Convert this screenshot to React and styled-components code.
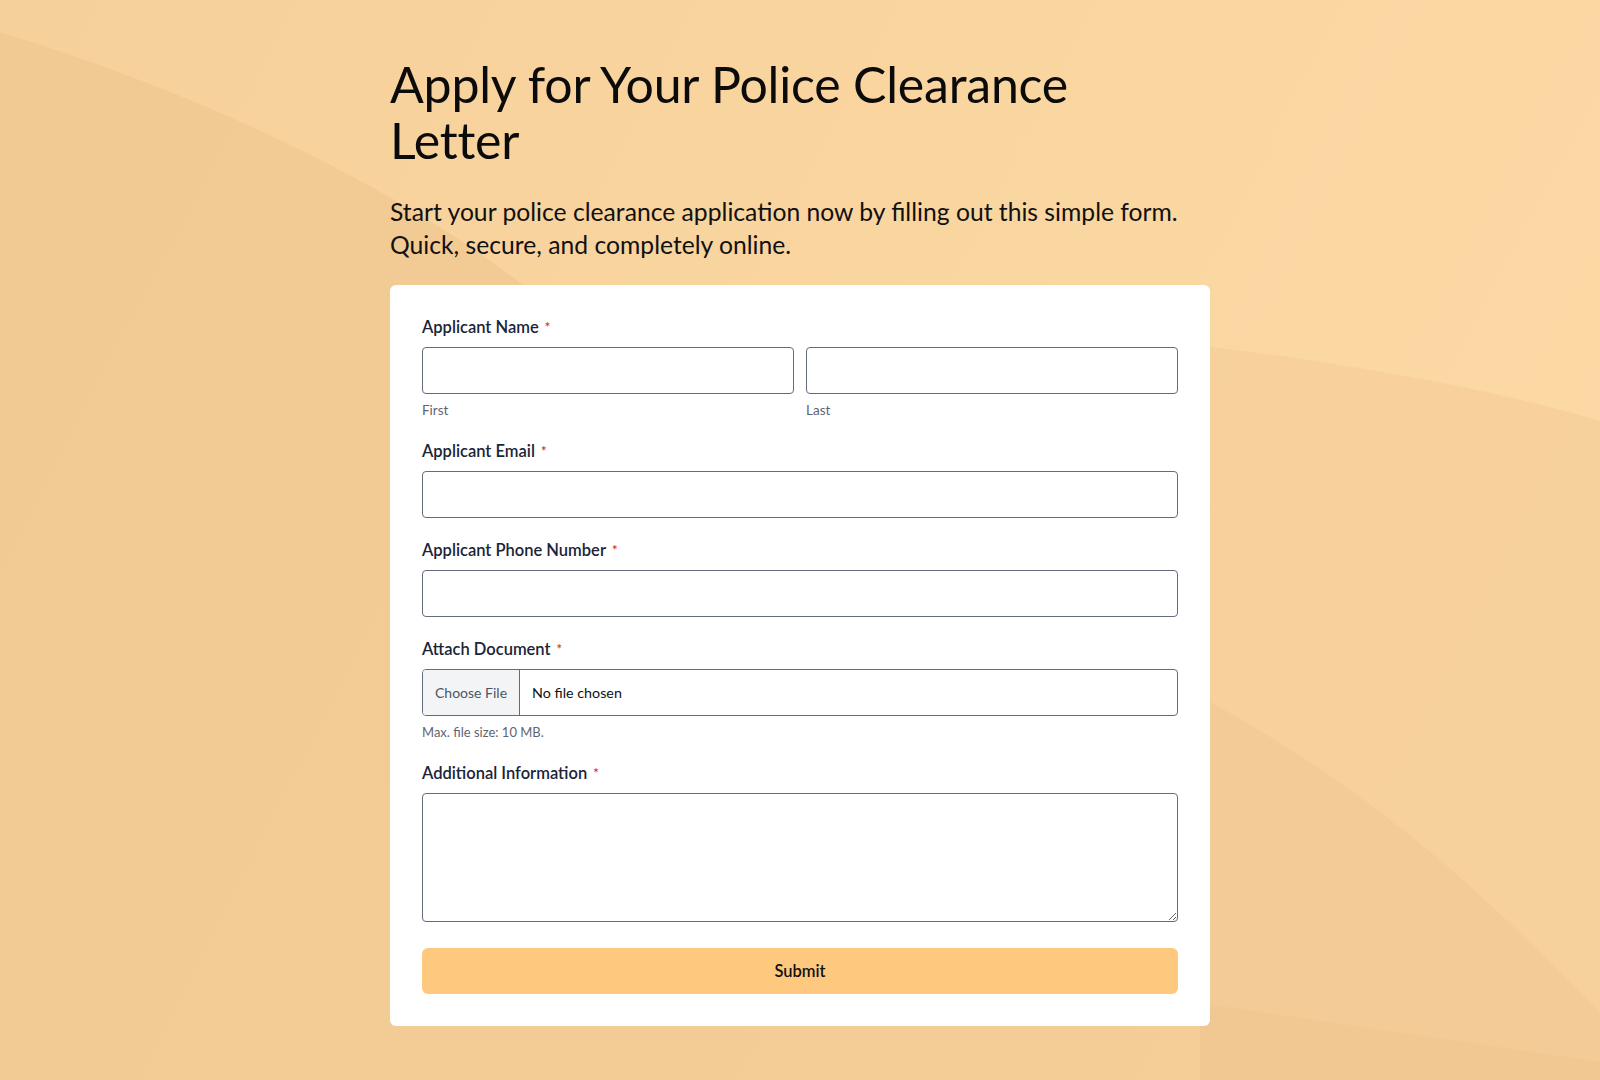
import styled, { createGlobalStyle } from "styled-components";

const GlobalStyle = createGlobalStyle`
  * { box-sizing: border-box; }
  html, body {
    margin: 0;
    padding: 0;
    background: #f7d29c;
    font-family: "Lato", "Noto Sans", sans-serif;
  }
`;

const Scene = styled.div`
  position: relative;
  min-height: 100vh;
  overflow: hidden;
`;

const BackdropSvg = styled.svg`
  position: absolute;
  top: 0;
  left: 0;
  width: 100%;
  height: 100%;
  display: block;
`;

const Backdrop = () => (
  <BackdropSvg viewBox="0 0 1600 1080" preserveAspectRatio="none">
    <defs>
      <linearGradient id="base" x1="0" y1="0" x2="1" y2="0.35">
        <stop offset="0" stopColor="#f6d09b" />
        <stop offset="1" stopColor="#fcd9a4" />
      </linearGradient>
    </defs>
    <rect x="0" y="0" width="1600" height="1080" fill="url(#base)" />
    <path
      d="M0 32 C 190 90, 390 180, 530 290 C 700 430, 950 800, 1190 1000 L 1600 1060 L 1600 1080 L 0 1080 Z"
      fill="#ecc38d"
      opacity="0.55"
    />
    <path
      d="M1200 345 C 1330 360, 1480 385, 1600 420 L 1600 1080 L 1200 1080 Z"
      fill="#f1c892"
      opacity="0.45"
    />
    <path
      d="M1200 695 C 1300 750, 1370 800, 1430 850 C 1490 900, 1550 960, 1600 1010 L 1600 1080 L 1200 1080 Z"
      fill="#eec48e"
      opacity="0.4"
    />
  </BackdropSvg>
);

const Page = styled.main`
  position: relative;
  width: 820px;
  margin: 0 auto;
  padding: 56px 0 56px;
`;

const Title = styled.h1`
  margin: 0;
  max-width: 760px;
  font-size: 50px;
  font-weight: 400;
  line-height: 56px;
  color: #0b0b0b;
  letter-spacing: -0.2px;
`;

const Intro = styled.p`
  margin: 27px 0 24px;
  font-size: 24.7px;
  line-height: 33px;
  color: #111;
`;

const Card = styled.form`
  background: #fff;
  border-radius: 6px;
  padding: 32px 32px 32px;
  display: flex;
  flex-direction: column;
`;

const Field = styled.div`
  display: flex;
  flex-direction: column;
  margin-bottom: 22px;
`;

const Label = styled.label`
  font-size: 16.5px;
  font-weight: 600;
  color: #1a2438;
  line-height: 20px;
  margin-bottom: 10px;
`;

const Star = styled.span`
  color: #d93025;
  font-size: 13px;
  margin-left: 6px;
  vertical-align: 1px;
`;

const Split = styled.div`
  display: grid;
  grid-template-columns: 1fr 1fr;
  gap: 12px;
`;

const Part = styled.div`
  display: flex;
  flex-direction: column;
`;

const Input = styled.input`
  height: 47px;
  width: 100%;
  border: 1px solid #646b7c;
  border-radius: 4px;
  padding: 0 12px;
  font-family: inherit;
  font-size: 15px;
  background: #fff;
  outline: none;
`;

const Hint = styled.span`
  font-size: ${({ $small }) => ($small ? 13 : 13.5)}px;
  color: #5f6673;
  margin-top: 8px;
  line-height: 17px;
`;

const FileInput = styled.input`
  height: 47px;
  width: 100%;
  border: 1px solid #646b7c;
  border-radius: 4px;
  padding: 0;
  font-family: inherit;
  font-size: 14.3px;
  line-height: 45px;
  color: #111;
  background: #fff;
  overflow: hidden;

  &::file-selector-button {
    height: 45px;
    margin: 0 12px 0 0;
    padding: 0 12px;
    border: none;
    border-right: 1px solid #646b7c;
    background: #f3f4f6;
    color: #4b5563;
    font-family: inherit;
    font-size: 14px;
  }
`;

const TextArea = styled.textarea`
  height: 129px;
  width: 100%;
  border: 1px solid #646b7c;
  border-radius: 4px;
  padding: 10px 12px;
  font-family: inherit;
  font-size: 15px;
  outline: none;
`;

const Submit = styled.button`
  height: 46px;
  width: 100%;
  margin-top: 4px;
  border: none;
  border-radius: 6px;
  background: #fec97f;
  color: #111;
  font-family: inherit;
  font-size: 16.5px;
  font-weight: 600;
  cursor: pointer;
`;

const Required = ({ children, htmlFor }) => (
  <Label htmlFor={htmlFor}>
    {children}
    <Star>*</Star>
  </Label>
);

export default function App() {
  return (
    <>
      <GlobalStyle />
      <Scene>
        <Backdrop />
        <Page>
          <Title>Apply for Your Police Clearance Letter</Title>
          <Intro>
            Start your police clearance application now by filling out this simple form. Quick,
            secure, and completely online.
          </Intro>
          <Card onSubmit={(e) => e.preventDefault()}>
            <Field>
              <Required htmlFor="first">Applicant Name</Required>
              <Split>
                <Part>
                  <Input id="first" />
                  <Hint>First</Hint>
                </Part>
                <Part>
                  <Input id="last" />
                  <Hint>Last</Hint>
                </Part>
              </Split>
            </Field>
            <Field>
              <Required htmlFor="email">Applicant Email</Required>
              <Input id="email" type="email" />
            </Field>
            <Field>
              <Required htmlFor="phone">Applicant Phone Number</Required>
              <Input id="phone" type="tel" />
            </Field>
            <Field>
              <Required htmlFor="doc">Attach Document</Required>
              <FileInput id="doc" type="file" />
              <Hint $small>Max. file size: 10 MB.</Hint>
            </Field>
            <Field>
              <Required htmlFor="info">Additional Information</Required>
              <TextArea id="info" />
            </Field>
            <Submit type="submit">Submit</Submit>
          </Card>
        </Page>
      </Scene>
    </>
  );
}
